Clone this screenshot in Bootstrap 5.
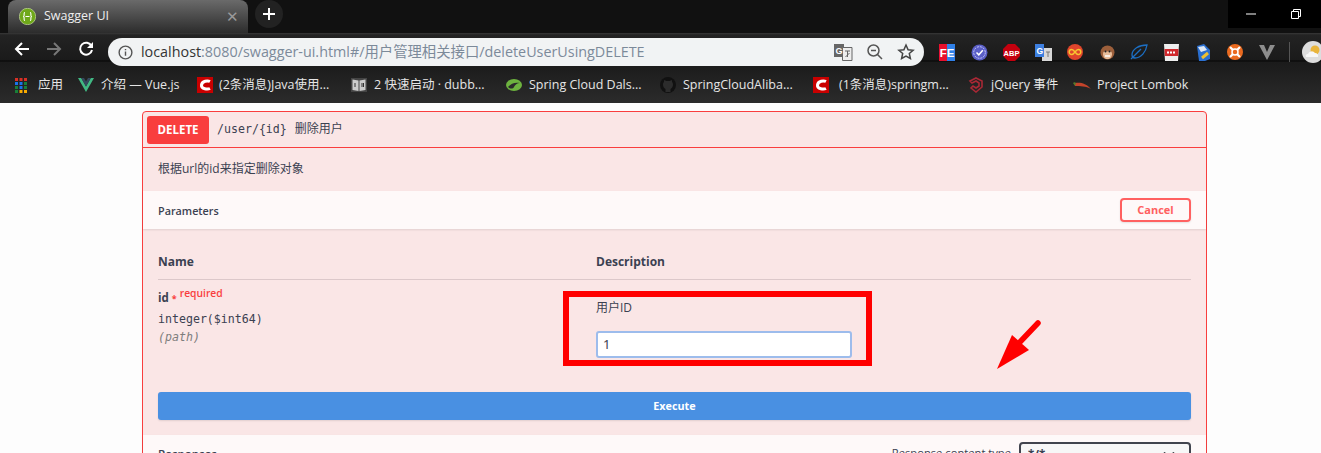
<!DOCTYPE html>
<html lang="zh">
<head>
  <meta charset="UTF-8">
  <title>Swagger UI</title>
  <link href="https://cdn.jsdelivr.net/npm/bootstrap@5.3.3/dist/css/bootstrap.min.css" rel="stylesheet">
  <style>
    html, body { height: 453px; overflow: hidden; }
    body { position: relative; background: #fdfdfd; color: #3b4151; font-family: "Open Sans", "Noto Sans CJK SC", sans-serif; font-size: 12px; }

    /* browser chrome */
    .tab-strip { height: 33px; background: #111; color: #fff; }
    .tab-shape { width: 240px; height: 33px; margin-left: 8px; padding: 0 9px 0 11px; border-radius: 8px 8px 0 0; background: linear-gradient(#6a6a6a, #2c2c2c); font-size: 12.5px; color: #eee; }
    .tab-close { margin-left: auto; color: #999; font-size: 15px; }
    .tab-new { width: 28px; height: 28px; margin-left: 7px; border-radius: 50%; background: #222; }
    .win-btns { margin-left: auto; height: 28px; padding-right: 3px; background: #000; }
    .win-btn { width: 45px; height: 28px; }
    .tool-strip { height: 33px; padding-left: 6px; background: linear-gradient(#383838 0, #232323 2px, #1a1a1a 27px, #050505 28px, #1b1b1b 29px, #1c1c1c 100%); overflow: hidden; }
    .nav-ico { width: 32px; flex: none; }
    .url-pill { flex: none; width: 816px; height: 28px; margin-left: 6px; margin-top: 5px; padding: 0 9px 0 10px; border-radius: 14px; background: #f1f3f4; color: #7c8a9a; font-size: 14.35px; white-space: nowrap; }
    .url-host { color: #333; }
    .url-end { margin-left: auto; gap: 13px; }
    .ext-row { flex: none; margin-left: 7px; }
    .ext-ico { width: 32px; }
    .tool-sep { width: 1px; height: 20px; background: #555; margin: 0 12px 0 6px; }
    .avatar-ico { flex: none; }
    .mark-strip { height: 37px; padding: 1px 0 0 14px; background: linear-gradient(#1c1c1c, #2b2b2b); color: #e6e6e6; font-size: 12.5px; white-space: nowrap; }
    .mark-item { gap: 6px; }
    .mark-item:nth-child(1) { width: 64px; }
    .mark-item:nth-child(2) { width: 119px; }
    .mark-item:nth-child(3) { width: 154px; }
    .mark-item:nth-child(4) { width: 154px; }
    .mark-item:nth-child(5) { width: 155px; }
    .mark-item:nth-child(6) { width: 153px; }
    .mark-item:nth-child(7) { width: 155px; }
    .mark-item:nth-child(8) { width: 105px; }
    .mark-txt { margin-left: 1px; }

    /* swagger block */
    .op-block { width: 1065px; margin: 8px 0 0 142px; border: 1px solid #f93e3e; border-radius: 4px 4px 0 0; background: #fae6e6; }
    .op-head { height: 36px; padding: 4px; border-bottom: 1px solid #f93e3e; }
    .op-method { width: 62px; height: 28px; border-radius: 3px; background: #f93e3e; color: #fff; font-weight: 700; font-size: 11.5px; }
    .op-path { margin-left: 8px; font-family: "DejaVu Sans Mono", "Noto Sans CJK SC", monospace; font-size: 11.6px; }
    .op-path-cn { margin-left: 1px; font-size: 12px; }
    .op-desc { height: 43px; padding: 0 0 2px 15px; font-size: 12px; }
    .section-bar { background: #fef9f9; box-shadow: 0 1px 2px rgba(0,0,0,.1); padding-left: 15px; padding-right: 15px; }
    .param-bar { height: 38px; font-weight: 600; font-size: 10.8px; }
    .param-txt { padding-top: 2px; }
    .cancel-btn { width: 71px; height: 24px; padding: 0; border: 2px solid #ff6060; border-radius: 4px; color: #ff6060; background: transparent; font-weight: 700; font-size: 11px; box-shadow: 0 1px 2px rgba(0,0,0,.1); }
    .param-body { padding: 0 15px; }
    .param-head { height: 51px; padding-top: 24px; border-bottom: 1px solid #dcc8ca; font-weight: 700; font-size: 12px; }
    .col-name { width: 438px; flex: none; }
    .param-row { height: 112px; }
    .p-name { margin-top: 9px; line-height: 18px; font-weight: 700; font-size: 11.5px; }
    .p-star { color: #f93e3e; font-size: 9px; }
    .p-req { position: relative; top: -5px; color: #f93e3e; font-weight: 600; font-size: 10.3px; }
    .p-type { margin-top: 2px; font-family: "DejaVu Sans Mono", monospace; font-size: 11.6px; line-height: 18px; }
    .p-in { font-family: "DejaVu Sans Mono", monospace; font-size: 11.6px; font-style: italic; color: #7d7d7d; line-height: 18px; }
    .p-label { margin-top: 19px; font-size: 12px; line-height: 18px; }
    .p-input { width: 256px; height: 27px; margin-top: 14px; padding: 0 5px 2px; border: 2px solid #9dbcec; border-radius: 3px; font-size: 13px; color: #3b4151; font-family: "Noto Sans", sans-serif; }
    .exec-btn { width: 1033px; height: 28px; padding: 1px 0 0; border: 0; border-radius: 3px; background: #4990e2; color: #fff; font-weight: 700; font-size: 10.8px; box-shadow: 0 1px 2px rgba(0,0,0,.1); }
    .exec-wrap { height: 43px; }
    .resp-bar { height: 40px; padding-top: 7px; font-weight: 600; font-size: 11.5px; }
    .resp-txt { margin-top: 3px; }
    .resp-label { margin-left: auto; margin-right: 8px; font-size: 11.2px; font-weight: 400; }
    .resp-select { width: 172px; height: 26px; padding: 0 8px 0 7px; border: 2px solid #41444e; border-radius: 4px; background-color: #f7f7f7; font-weight: 700; font-size: 11.5px; color: #3b4151; }

    /* annotation drawn over the shot */
    .mark-box { position: absolute; left: 563px; top: 291px; width: 309px; height: 75px; border: 6px solid #f00; }
    .mark-arrow { position: absolute; left: 990px; top: 315px; }
    .ico-text { font-family: "Liberation Sans", sans-serif; font-weight: 700; }
  </style>
</head>
<body>

<!-- browser top -->
<div class="tab-strip d-flex align-items-start">
  <div class="tab-shape d-flex align-items-center">
    <svg width="17" height="17" viewBox="0 0 17 17" class="me-2"><circle cx="8.500" cy="8.500" r="8.200" fill="#6fa81a" stroke="#d5e6b0" stroke-width=".6"/><path d="M6 4.500c-1.200 0-.8 2-.9 3-.1.600-.5 1-1 1 .5 0 .9.400 1 1 .1 1-.3 3 .9 3M11 4.500c1.200 0 .8 2 .9 3 .1.600.5 1 1 1-.5 0-.9.400-1 1-.1 1 .3 3-.9 3M6.500 8.500h4" fill="none" stroke="#fff" stroke-width="1.100"/></svg>
    <span>Swagger UI</span>
    <span class="tab-close">&#10005;</span>
  </div>
  <div class="tab-new d-flex align-items-center justify-content-center">
    <svg width="14" height="14" viewBox="0 0 14 14"><path d="M7 1v12M1 7h12" stroke="#fff" stroke-width="2"/></svg>
  </div>
  <div class="win-btns d-flex">
    <div class="win-btn d-flex align-items-center justify-content-center"><svg width="12" height="12" viewBox="0 0 12 12"><path d="M1 6h10" stroke="#fff"/></svg></div>
    <div class="win-btn d-flex align-items-center justify-content-center"><svg width="12" height="12" viewBox="0 0 12 12"><path d="M1.500 3.500h7v7h-7zM3.500 3.500v-2h7v7h-2" fill="none" stroke="#fff"/></svg></div>
  </div>
</div>

<div class="tool-strip d-flex align-items-start">
  <div class="nav-ico d-flex justify-content-center mt-2"><svg width="16" height="16" viewBox="0 0 16 16"><path d="M15 8H2M8 2 2 8l6 6" fill="none" stroke="#fff" stroke-width="2"/></svg></div>
  <div class="nav-ico d-flex justify-content-center mt-2"><svg width="16" height="16" viewBox="0 0 16 16"><path d="M1 8h13M8 2l6 6-6 6" fill="none" stroke="#777" stroke-width="2"/></svg></div>
  <div class="nav-ico d-flex justify-content-center mt-2"><svg width="16" height="16" viewBox="0 0 16 16"><path d="M13.500 5A6 6 0 1 0 14 9" fill="none" stroke="#fff" stroke-width="2"/><path d="M15 1v6H9z" fill="#fff"/></svg></div>
  <div class="url-pill d-flex align-items-center">
    <svg width="15" height="15" viewBox="0 0 16 16" class="me-2"><circle cx="8" cy="8" r="6.800" fill="none" stroke="#555" stroke-width="1.500"/><path d="M8 7v4.500M8 4.200v1.500" stroke="#555" stroke-width="1.500"/></svg>
    <span><span class="url-host">localhost</span>:8080/swagger-ui.html#/用户管理相关接口/deleteUserUsingDELETE</span>
    <div class="url-end d-flex align-items-center">
      <svg width="19" height="17" viewBox="0 0 19 17"><path d="M0 0h10v13H0z" fill="#666"/><path d="M8.500 3.500h9.500v13H8.500z" fill="#eee" stroke="#666"/><text x="1.500" y="10" font-size="9" fill="#fff" class="ico-text">G</text><path d="M11 7h5M13.500 7v6M11.500 13l4-4" stroke="#666" fill="none"/></svg>
      <svg width="18" height="18" viewBox="0 0 18 18"><circle cx="7.500" cy="7.500" r="5.500" fill="none" stroke="#555" stroke-width="1.500"/><path d="M11.500 11.500 16 16M5 7.500h5" stroke="#555" stroke-width="1.500"/></svg>
      <svg width="18" height="18" viewBox="0 0 18 18"><path d="m9 2 2.100 4.700 5 .5-3.800 3.300 1.100 5L9 13l-4.400 2.500 1.100-5L1.900 7.200l5-.5z" fill="none" stroke="#444" stroke-width="1.500"/></svg>
    </div>
  </div>
  <div class="ext-row d-flex align-items-center mt-2">
    <div class="ext-ico d-flex justify-content-center"><svg width="16" height="17" viewBox="0 0 16 17"><path d="M0 0h8v17H0z" fill="#e8102c"/><path d="M8 0h8v17H8z" fill="#2f80e8"/><text x="8" y="13" text-anchor="middle" font-size="11.500" fill="#fff" class="ico-text">FE</text></svg></div>
    <div class="ext-ico d-flex justify-content-center"><svg width="17" height="17" viewBox="0 0 17 17"><circle cx="8.500" cy="8.500" r="8" fill="#5b5fc7"/><circle cx="8.500" cy="8.500" r="5.800" fill="none" stroke="#c8cafa" stroke-dasharray="2 1"/><path d="m5.500 8.500 2.300 2.300 4-4.500" fill="none" stroke="#fff" stroke-width="1.500"/></svg></div>
    <div class="ext-ico d-flex justify-content-center"><svg width="17" height="17" viewBox="0 0 17 17"><path d="M5 0h7l5 5v7l-5 5H5l-5-5V5z" fill="#c4000e"/><text x="8.500" y="11.500" text-anchor="middle" font-size="7.500" fill="#fff" class="ico-text">ABP</text></svg></div>
    <div class="ext-ico d-flex justify-content-center"><svg width="17" height="17" viewBox="0 0 17 17"><path d="M7 4h10v13H7z" fill="#d8d8d8"/><path d="M0 0h9v13H0z" fill="#3d7fe0"/><text x="1.500" y="10" font-size="8.500" fill="#fff" class="ico-text">G</text><path d="M11 8h4M13 8v5" stroke="#777"/></svg></div>
    <div class="ext-ico d-flex justify-content-center"><svg width="16" height="16" viewBox="0 0 16 16"><circle cx="8" cy="8" r="8" fill="#e0452c"/><path d="M8 8C6.500 6 6 5.500 4.700 5.500a2.500 2.500 0 0 0 0 5C6 10.500 6.500 10 8 8c1.500-2 2-2.500 3.300-2.500a2.500 2.500 0 0 1 0 5C10 10.500 9.500 10 8 8z" fill="none" stroke="#f7c531" stroke-width="1.500"/></svg></div>
    <div class="ext-ico d-flex justify-content-center"><svg width="15" height="17" viewBox="0 0 15 17"><circle cx="7.500" cy="8.500" r="7" fill="#9c5f3b"/><path d="M3 10c0-3 2-3 4.500-2.500C10 7 12 7 12 10s-2 5-4.500 5S3 13 3 10z" fill="#e8bd9a"/><circle cx="5.500" cy="7.500" r="1" fill="#222"/><circle cx="9.500" cy="7.500" r="1" fill="#222"/><path d="M5 12h5" stroke="#fff" stroke-width="1.500"/></svg></div>
    <div class="ext-ico d-flex justify-content-center"><svg width="18" height="16" viewBox="0 0 18 16"><path d="M17 1C9 1 2 5 2 11c0 2 1 3 3 3C11 14 16 8 17 1zM1 15 11 5" fill="none" stroke="#1c6fc4" stroke-width="1.300"/></svg></div>
    <div class="ext-ico d-flex justify-content-center"><svg width="15" height="17" viewBox="0 0 15 17"><path d="M0 0h15l-1 17H1z" fill="#eee"/><path d="M.5 5h14l-.3 7H.8z" fill="#d0282c"/><path d="M3 8.500h9" stroke="#fff" stroke-width="2" stroke-dasharray="2 1"/></svg></div>
    <div class="ext-ico d-flex justify-content-center"><svg width="16" height="17" viewBox="0 0 16 17"><path d="M2 2 9 0l6 6v9l-5 2H4z" fill="#2a6fd0"/><path d="M3 3l6-1 3 4-6 2z" fill="#dfe9f7"/><path d="m7 14 6-5" stroke="#f0c030" stroke-width="3"/></svg></div>
    <div class="ext-ico d-flex justify-content-center"><svg width="16" height="16" viewBox="0 0 16 16"><circle cx="8" cy="8" r="8" fill="#ea6a1f"/><circle cx="8" cy="8" r="3" fill="none" stroke="#fff" stroke-width="1.500"/><path d="m3 3 3 3M13 3l-3 3M3 13l3-3M13 13l-3-3" stroke="#fff" stroke-width="2.200"/></svg></div>
    <div class="ext-ico d-flex justify-content-center"><svg width="16" height="15" viewBox="0 0 16 15"><path d="M0 0h5l3 7 3-7h5L8 15z" fill="#8d8d8d"/></svg></div>
    <div class="tool-sep"></div>
    <svg class="avatar-ico" width="22" height="22" viewBox="0 0 22 22"><circle cx="11" cy="11" r="11" fill="#ddd"/><circle cx="13" cy="9" r="4.500" fill="#e9b53c"/><path d="M4 16h12a3 3 0 0 0-3-4 4 4 0 0 0-7 1 2 2 0 0 0-2 3z" fill="#f7f7f7"/></svg>
  </div>
</div>

<div class="mark-strip d-flex align-items-center">
  <div class="mark-item d-flex align-items-center">
    <svg width="14" height="15" viewBox="0 0 14 15"><path d="M1 0h3v3H1z" fill="#d93025"/><path d="M5.500 0h3v3h-3z" fill="#d93025"/><path d="M10 0h3v3h-3z" fill="#d93025"/><path d="M1 4h3v3H1z" fill="#1a73e8"/><path d="M5.500 4h3v3h-3z" fill="#1a73e8"/><path d="M10 4h3v3h-3z" fill="#188038"/><path d="M1 8h3v3H1z" fill="#188038"/><path d="M5.500 8h3v3h-3z" fill="#1a73e8"/><path d="M10 8h3v3h-3z" fill="#188038"/><path d="M1 12h3v3H1z" fill="#188038"/><path d="M5.500 12h3v3h-3z" fill="#f9ab00"/><path d="M10 12h3v3h-3z" fill="#f9ab00"/></svg>
    <span class="ms-1">应用</span>
  </div>
  <div class="mark-item d-flex align-items-center">
    <svg width="16" height="14" viewBox="0 0 16 14"><path d="M0 0h3.200L8 8.500 12.800 0H16L8 14z" fill="#41b883"/><path d="M3.200 0h2.800L8 3.500 10 0h2.800L8 8.500z" fill="#35495e"/></svg>
    <span class="mark-txt">介绍 — Vue.js</span>
  </div>
  <div class="mark-item d-flex align-items-center">
    <svg width="16" height="16" viewBox="0 0 16 16"><path d="M0 0h16v16H0z" fill="#c90000"/><path d="M13 4.500C11 3.500 5 3.500 4.500 8s6.500 4.500 8.500 3.500" fill="none" stroke="#fff" stroke-width="3"/></svg>
    <span>(2条消息)Java使用...</span>
  </div>
  <div class="mark-item d-flex align-items-center">
    <svg width="16" height="14" viewBox="0 0 16 14"><path d="M0 0h16v14H0z" fill="#444"/><path d="M1.500 1.500l6 1V13l-6-1zM14.500 1.500l-6 1V13l6-1z" fill="#ccc"/><path d="M4 5v4M11 5v4M12.500 5v4" stroke="#333"/></svg>
    <span class="mark-txt">2 快速启动 · dubb...</span>
  </div>
  <div class="mark-item d-flex align-items-center">
    <svg width="18" height="14" viewBox="0 0 18 14"><ellipse cx="9" cy="7" rx="8" ry="6" fill="#6db33f"/><path d="M3 9c3-4 8-5 12-4-3 0-5 2-6 4s-4 2-6 0z" fill="#2b2b2b"/></svg>
    <span>Spring Cloud Dals...</span>
  </div>
  <div class="mark-item d-flex align-items-center">
    <svg width="16" height="16" viewBox="0 0 16 16"><circle cx="8" cy="8" r="8" fill="#111"/><path d="M5.500 15v-3C4 11 3 10 3 7.500c0-1 .3-2 1-2.500 0-1 0-1.500.3-2l2 1h3.400l2-1c.3.500.3 1 .3 2 .7.500 1 1.500 1 2.500C13 10 12 11 10.500 12v3" fill="#2c2c2c"/></svg>
    <span class="mark-txt">SpringCloudAliba...</span>
  </div>
  <div class="mark-item d-flex align-items-center">
    <svg width="16" height="16" viewBox="0 0 16 16"><path d="M0 0h16v16H0z" fill="#c90000"/><path d="M13 4.500C11 3.500 5 3.500 4.500 8s6.500 4.500 8.500 3.500" fill="none" stroke="#fff" stroke-width="3"/></svg>
    <span class="ms-1">(1条消息)springm...</span>
  </div>
  <div class="mark-item d-flex align-items-center">
    <svg width="16" height="16" viewBox="0 0 16 16"><path d="M8 1 14 4v6l-6 5-5-4 2-2 3 2 3-2V6L8 4 4 6 2 4z" fill="none" stroke="#a92835" stroke-width="1.600"/></svg>
    <span class="mark-txt">jQuery 事件</span>
  </div>
  <div class="mark-item d-flex align-items-center">
    <svg width="18" height="9" viewBox="0 0 18 9"><path d="M2 2c5-1 11 0 16 6-5-3-11-3-16-3z" fill="#c4432a"/><path d="M0 2c1-1 2-1 3 0L2 5z" fill="#5b7a2a"/></svg>
    <span>Project Lombok</span>
  </div>
</div>

<!-- swagger operation -->
<div class="op-block">
  <div class="op-head d-flex align-items-center">
    <div class="op-method d-flex align-items-center justify-content-center">DELETE</div>
    <div class="op-path">/user/{id} <span class="op-path-cn">删除用户</span></div>
  </div>
  <div class="op-desc d-flex align-items-center">根据url的id来指定删除对象</div>
  <div class="section-bar param-bar d-flex align-items-center justify-content-between">
    <span class="param-txt">Parameters</span>
    <button class="btn cancel-btn" type="button">Cancel</button>
  </div>
  <div class="param-body">
    <div class="param-head d-flex">
      <div class="col-name">Name</div>
      <div>Description</div>
    </div>
    <div class="param-row d-flex">
      <div class="col-name">
        <div class="p-name">id <span class="p-star">*</span> <span class="p-req">required</span></div>
        <div class="p-type">integer($int64)</div>
        <div class="p-in">(path)</div>
      </div>
      <div>
        <div class="p-label">用户ID</div>
        <input class="form-control p-input" type="text" value="1">
      </div>
    </div>
    <div class="exec-wrap">
      <button class="btn exec-btn" type="button">Execute</button>
    </div>
  </div>
  <div class="section-bar resp-bar d-flex align-items-start">
    <span class="resp-txt">Responses</span>
    <span class="resp-txt resp-label">Response content type</span>
    <select class="form-select resp-select"><option>*/*</option></select>
  </div>
</div>

<!-- red annotation -->
<div class="mark-box"></div>
<svg class="mark-arrow" width="56" height="60" viewBox="990 315 56 60">
  <path d="M1038 323 1020 342" stroke="#f00" stroke-width="5.500" stroke-linecap="round"/>
  <path d="M997 369 1012 335 1029 350z" fill="#f00"/>
</svg>

<script src="https://cdn.jsdelivr.net/npm/bootstrap@5.3.3/dist/js/bootstrap.bundle.min.js"></script>
</body>
</html>
